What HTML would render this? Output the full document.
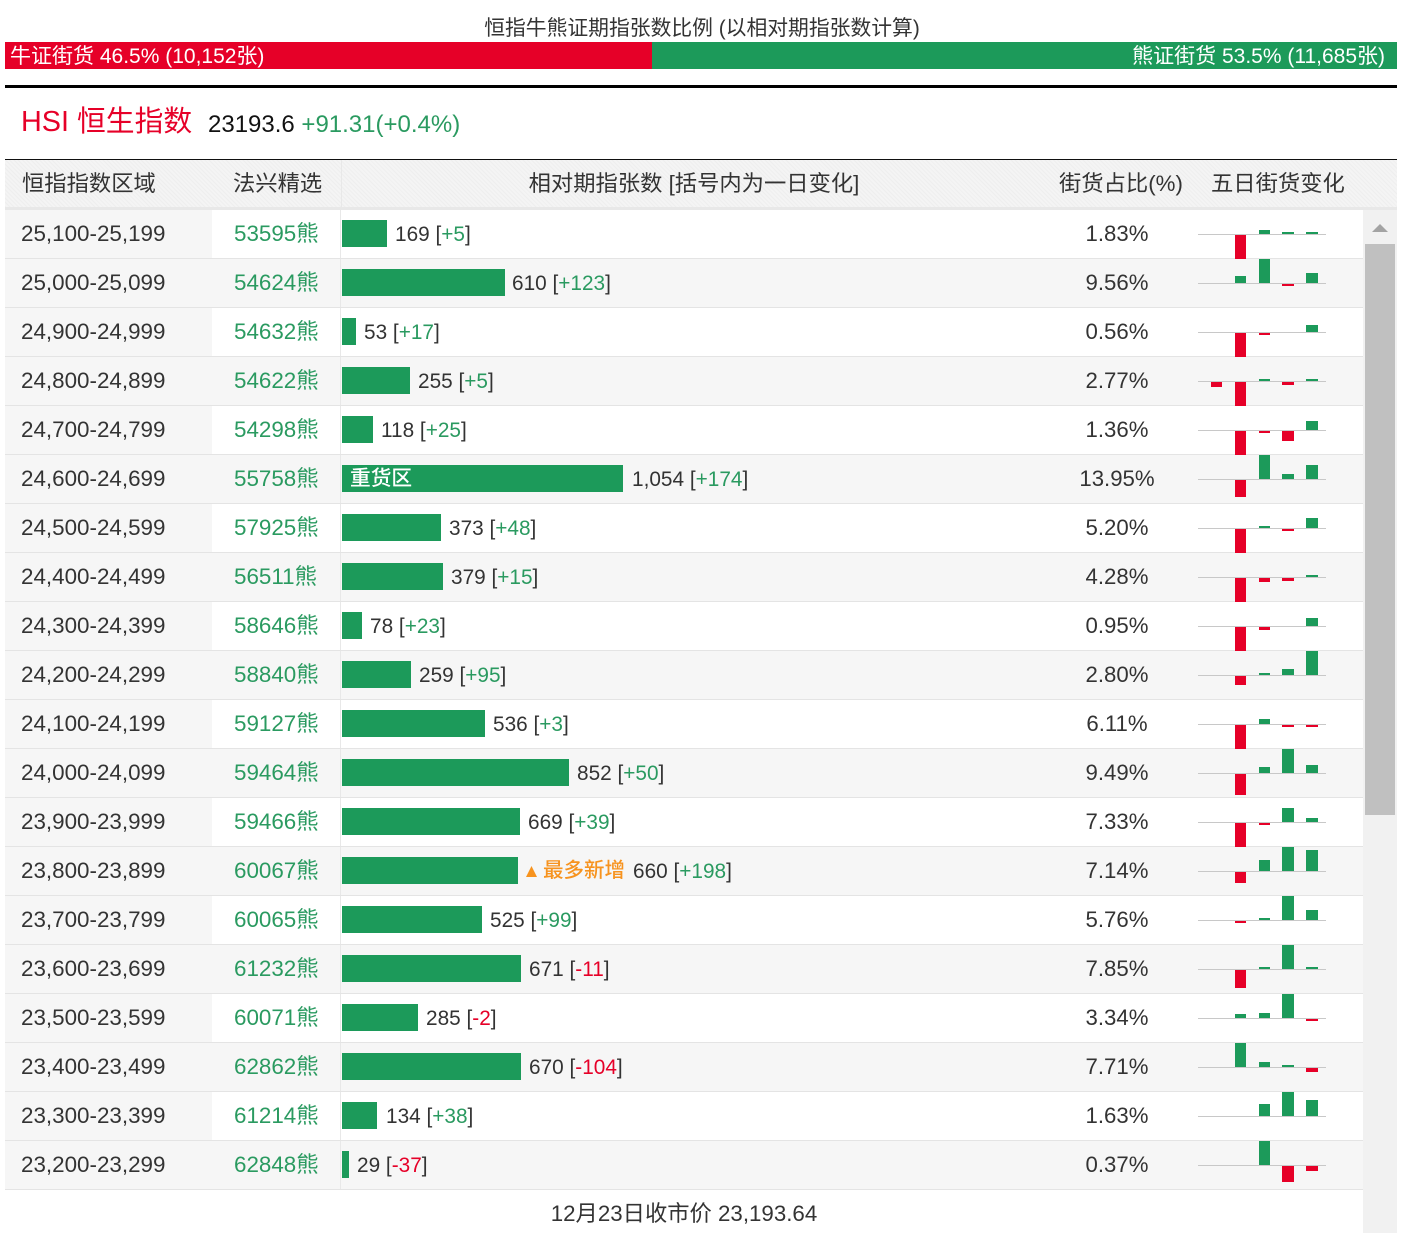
<!DOCTYPE html>
<html lang="zh"><head><meta charset="utf-8"><title>恒指牛熊证</title>
<style>
html,body{margin:0;padding:0;background:#fff}
body{width:1407px;height:1233px;position:relative;overflow:hidden;font-family:"Liberation Sans","Noto Sans CJK SC",sans-serif;color:#222}
.a{position:absolute;white-space:nowrap}
.hd{position:absolute;top:161px;height:46px;line-height:46px;font-size:22.3px;color:#333;white-space:nowrap}
.r{position:absolute;left:5px;width:1358px;height:49px;box-sizing:border-box;border-bottom:1px solid #e4e4e4;background:#fff;font-size:22.4px;line-height:47px;color:#333}
.r.o{background:#f6f6f6}
.r:not(.o)::before{content:"";position:absolute;left:0;top:0;width:207px;height:48px;background:#f6f6f6}
.r::after{content:"";position:absolute;left:335px;top:0;width:1px;height:48px;background:#e8e8e8}
.r::before{z-index:0}
.r>*{position:absolute;white-space:nowrap}
.l{left:16px;top:0}
.s{left:229px;top:0;color:#2a9a60}
.b{left:337px;top:10px;height:27px;background:#1c9a5a;color:#fff;line-height:27px;font-size:20.7px;font-weight:500}
.v{top:1px;font-size:20.8px}
.g{color:#2a9a60}.e{color:#e60028}
.p{left:1000px;width:224px;text-align:center;top:0;font-size:22.2px}
.z{left:1193px;top:24px;width:128px;height:1px;background:#c8c8c8}
.u,.d{width:11px}
.u{bottom:24px;background:#1c9a5a}
.d{top:25px;background:#e60028}
.c1{left:1206px}.c2{left:1230px}.c3{left:1254px}.c4{left:1277px;width:12px}.c5{left:1301px;width:12px}
</style></head><body>
<div class="a" style="left:0;width:1404px;text-align:center;top:16px;font-size:20.8px;line-height:26px;color:#333">恒指牛熊证期指张数比例 (以相对期指张数计算)</div>
<div class="a" style="left:5px;top:42px;width:647px;height:27px;background:#e60028;color:#fff;font-size:21px;line-height:29px"><span style="margin-left:5px">牛证街货 46.5% (10,152张)</span></div>
<div class="a" style="left:652px;top:42px;width:745px;height:27px;background:#1c9a5a;color:#fff;font-size:21px;line-height:29px;text-align:right"><span style="margin-right:12px">熊证街货 53.5% (11,685张)</span></div>
<div class="a" style="left:5px;top:85px;width:1392px;height:3px;background:#000"></div>
<div class="a" style="left:21px;top:104px;font-size:28.8px;line-height:36px;color:#e60028">HSI 恒生指数</div>
<div class="a" style="left:208px;top:110px;font-size:24px;line-height:30px;color:#111">23193.6 <span class="g">+91.31(+0.4%)</span></div>

<div class="a" style="left:5px;top:159px;width:1392px;height:1px;background:#111"></div>
<div class="a" style="left:5px;top:160px;width:1392px;height:47px;background-color:#f4f4f4;background-image:repeating-linear-gradient(45deg,#eee 0 1px,transparent 1px 3px)"></div>
<div class="a" style="left:5px;top:207px;width:1392px;height:3px;background:#e8e8e8"></div>
<div class="a" style="left:341px;top:160px;width:1px;height:47px;background:#e8e8e8"></div>
<div class="hd" style="left:22px">恒指指数区域</div>
<div class="hd" style="left:233px">法兴精选</div>
<div class="hd" style="left:342px;width:704px;text-align:center">相对期指张数 [括号内为一日变化]</div>
<div class="hd" style="left:1059px">街货占比(%)</div>
<div class="hd" style="left:1211px">五日街货变化</div>

<div class="r" style="top:210px"><span class="l">25,100-25,199</span><span class="s">53595熊</span><i class="b" style="width:45px"></i><span class="v" style="left:390px">169 [<span class="g">+5</span>]</span><span class="p">1.83%</span><i class="z"></i><i class="d c2" style="height:24px"></i><i class="u c3" style="height:4px"></i><i class="u c4" style="height:2px"></i><i class="u c5" style="height:2px"></i></div>
<div class="r o" style="top:259px"><span class="l">25,000-25,099</span><span class="s">54624熊</span><i class="b" style="width:163px"></i><span class="v" style="left:507px">610 [<span class="g">+123</span>]</span><span class="p">9.56%</span><i class="z"></i><i class="u c2" style="height:7px"></i><i class="u c3" style="height:24px"></i><i class="d c4" style="height:2px"></i><i class="u c5" style="height:10px"></i></div>
<div class="r" style="top:308px"><span class="l">24,900-24,999</span><span class="s">54632熊</span><i class="b" style="width:14px"></i><span class="v" style="left:359px">53 [<span class="g">+17</span>]</span><span class="p">0.56%</span><i class="z"></i><i class="d c2" style="height:24px"></i><i class="d c3" style="height:2px"></i><i class="u c5" style="height:7px"></i></div>
<div class="r o" style="top:357px"><span class="l">24,800-24,899</span><span class="s">54622熊</span><i class="b" style="width:68px"></i><span class="v" style="left:413px">255 [<span class="g">+5</span>]</span><span class="p">2.77%</span><i class="z"></i><i class="d c1" style="height:5px"></i><i class="d c2" style="height:24px"></i><i class="u c3" style="height:2px"></i><i class="d c4" style="height:3px"></i><i class="u c5" style="height:2px"></i></div>
<div class="r" style="top:406px"><span class="l">24,700-24,799</span><span class="s">54298熊</span><i class="b" style="width:31px"></i><span class="v" style="left:376px">118 [<span class="g">+25</span>]</span><span class="p">1.36%</span><i class="z"></i><i class="d c2" style="height:24px"></i><i class="d c3" style="height:2px"></i><i class="d c4" style="height:10px"></i><i class="u c5" style="height:9px"></i></div>
<div class="r o" style="top:455px"><span class="l">24,600-24,699</span><span class="s">55758熊</span><i class="b" style="width:281px;text-indent:8px;font-style:normal">重货区</i><span class="v" style="left:627px">1,054 [<span class="g">+174</span>]</span><span class="p">13.95%</span><i class="z"></i><i class="d c2" style="height:17px"></i><i class="u c3" style="height:24px"></i><i class="u c4" style="height:5px"></i><i class="u c5" style="height:14px"></i></div>
<div class="r" style="top:504px"><span class="l">24,500-24,599</span><span class="s">57925熊</span><i class="b" style="width:99px"></i><span class="v" style="left:444px">373 [<span class="g">+48</span>]</span><span class="p">5.20%</span><i class="z"></i><i class="d c2" style="height:24px"></i><i class="u c3" style="height:2px"></i><i class="d c4" style="height:2px"></i><i class="u c5" style="height:10px"></i></div>
<div class="r o" style="top:553px"><span class="l">24,400-24,499</span><span class="s">56511熊</span><i class="b" style="width:101px"></i><span class="v" style="left:446px">379 [<span class="g">+15</span>]</span><span class="p">4.28%</span><i class="z"></i><i class="d c2" style="height:24px"></i><i class="d c3" style="height:4px"></i><i class="d c4" style="height:3px"></i><i class="u c5" style="height:2px"></i></div>
<div class="r" style="top:602px"><span class="l">24,300-24,399</span><span class="s">58646熊</span><i class="b" style="width:20px"></i><span class="v" style="left:365px">78 [<span class="g">+23</span>]</span><span class="p">0.95%</span><i class="z"></i><i class="d c2" style="height:24px"></i><i class="d c3" style="height:3px"></i><i class="u c5" style="height:8px"></i></div>
<div class="r o" style="top:651px"><span class="l">24,200-24,299</span><span class="s">58840熊</span><i class="b" style="width:69px"></i><span class="v" style="left:414px">259 [<span class="g">+95</span>]</span><span class="p">2.80%</span><i class="z"></i><i class="d c2" style="height:9px"></i><i class="u c3" style="height:2px"></i><i class="u c4" style="height:6px"></i><i class="u c5" style="height:24px"></i></div>
<div class="r" style="top:700px"><span class="l">24,100-24,199</span><span class="s">59127熊</span><i class="b" style="width:143px"></i><span class="v" style="left:488px">536 [<span class="g">+3</span>]</span><span class="p">6.11%</span><i class="z"></i><i class="d c2" style="height:24px"></i><i class="u c3" style="height:5px"></i><i class="d c4" style="height:2px"></i><i class="d c5" style="height:2px"></i></div>
<div class="r o" style="top:749px"><span class="l">24,000-24,099</span><span class="s">59464熊</span><i class="b" style="width:227px"></i><span class="v" style="left:572px">852 [<span class="g">+50</span>]</span><span class="p">9.49%</span><i class="z"></i><i class="d c2" style="height:21px"></i><i class="u c3" style="height:6px"></i><i class="u c4" style="height:24px"></i><i class="u c5" style="height:8px"></i></div>
<div class="r" style="top:798px"><span class="l">23,900-23,999</span><span class="s">59466熊</span><i class="b" style="width:178px"></i><span class="v" style="left:523px">669 [<span class="g">+39</span>]</span><span class="p">7.33%</span><i class="z"></i><i class="d c2" style="height:24px"></i><i class="d c3" style="height:2px"></i><i class="u c4" style="height:14px"></i><i class="u c5" style="height:4px"></i></div>
<div class="r o" style="top:847px"><span class="l">23,800-23,899</span><span class="s">60067熊</span><i class="b" style="width:176px"></i><svg style="left:521px;top:19px" width="11" height="11"><path d="M5.5 0L11 11H0Z" fill="#f7931e"/></svg><span class="v" style="left:538px;top:0;color:#f7931e;font-size:20.5px;font-weight:500">最多新增</span><span class="v" style="left:628px">660 [<span class="g">+198</span>]</span><span class="p">7.14%</span><i class="z"></i><i class="d c2" style="height:11px"></i><i class="u c3" style="height:11px"></i><i class="u c4" style="height:24px"></i><i class="u c5" style="height:21px"></i></div>
<div class="r" style="top:896px"><span class="l">23,700-23,799</span><span class="s">60065熊</span><i class="b" style="width:140px"></i><span class="v" style="left:485px">525 [<span class="g">+99</span>]</span><span class="p">5.76%</span><i class="z"></i><i class="d c2" style="height:2px"></i><i class="u c3" style="height:2px"></i><i class="u c4" style="height:24px"></i><i class="u c5" style="height:10px"></i></div>
<div class="r o" style="top:945px"><span class="l">23,600-23,699</span><span class="s">61232熊</span><i class="b" style="width:179px"></i><span class="v" style="left:524px">671 [<span class="e">-11</span>]</span><span class="p">7.85%</span><i class="z"></i><i class="d c2" style="height:18px"></i><i class="u c3" style="height:2px"></i><i class="u c4" style="height:24px"></i><i class="u c5" style="height:2px"></i></div>
<div class="r" style="top:994px"><span class="l">23,500-23,599</span><span class="s">60071熊</span><i class="b" style="width:76px"></i><span class="v" style="left:421px">285 [<span class="e">-2</span>]</span><span class="p">3.34%</span><i class="z"></i><i class="u c2" style="height:4px"></i><i class="u c3" style="height:5px"></i><i class="u c4" style="height:24px"></i><i class="d c5" style="height:2px"></i></div>
<div class="r o" style="top:1043px"><span class="l">23,400-23,499</span><span class="s">62862熊</span><i class="b" style="width:179px"></i><span class="v" style="left:524px">670 [<span class="e">-104</span>]</span><span class="p">7.71%</span><i class="z"></i><i class="u c2" style="height:24px"></i><i class="u c3" style="height:5px"></i><i class="u c4" style="height:2px"></i><i class="d c5" style="height:4px"></i></div>
<div class="r" style="top:1092px"><span class="l">23,300-23,399</span><span class="s">61214熊</span><i class="b" style="width:35px"></i><span class="v" style="left:381px">134 [<span class="g">+38</span>]</span><span class="p">1.63%</span><i class="z"></i><i class="u c3" style="height:12px"></i><i class="u c4" style="height:24px"></i><i class="u c5" style="height:16px"></i></div>
<div class="r o" style="top:1141px"><span class="l">23,200-23,299</span><span class="s">62848熊</span><i class="b" style="width:7px"></i><span class="v" style="left:352px">29 [<span class="e">-37</span>]</span><span class="p">0.37%</span><i class="z"></i><i class="u c3" style="height:24px"></i><i class="d c4" style="height:16px"></i><i class="d c5" style="height:5px"></i></div>

<div class="a" style="left:5px;width:1358px;text-align:center;top:1200px;font-size:22.3px;line-height:28px;color:#333">12月23日收市价 23,193.64</div>

<div class="a" style="left:1363px;top:210px;width:34px;height:1023px;background:#f1f1f1"></div>
<svg class="a" style="left:1372px;top:224px" width="16" height="8"><path d="M8 0L16 8H0Z" fill="#a3a3a3"/></svg>
<div class="a" style="left:1365px;top:244px;width:30px;height:571px;background:#c0c0c0"></div>
</body></html>
